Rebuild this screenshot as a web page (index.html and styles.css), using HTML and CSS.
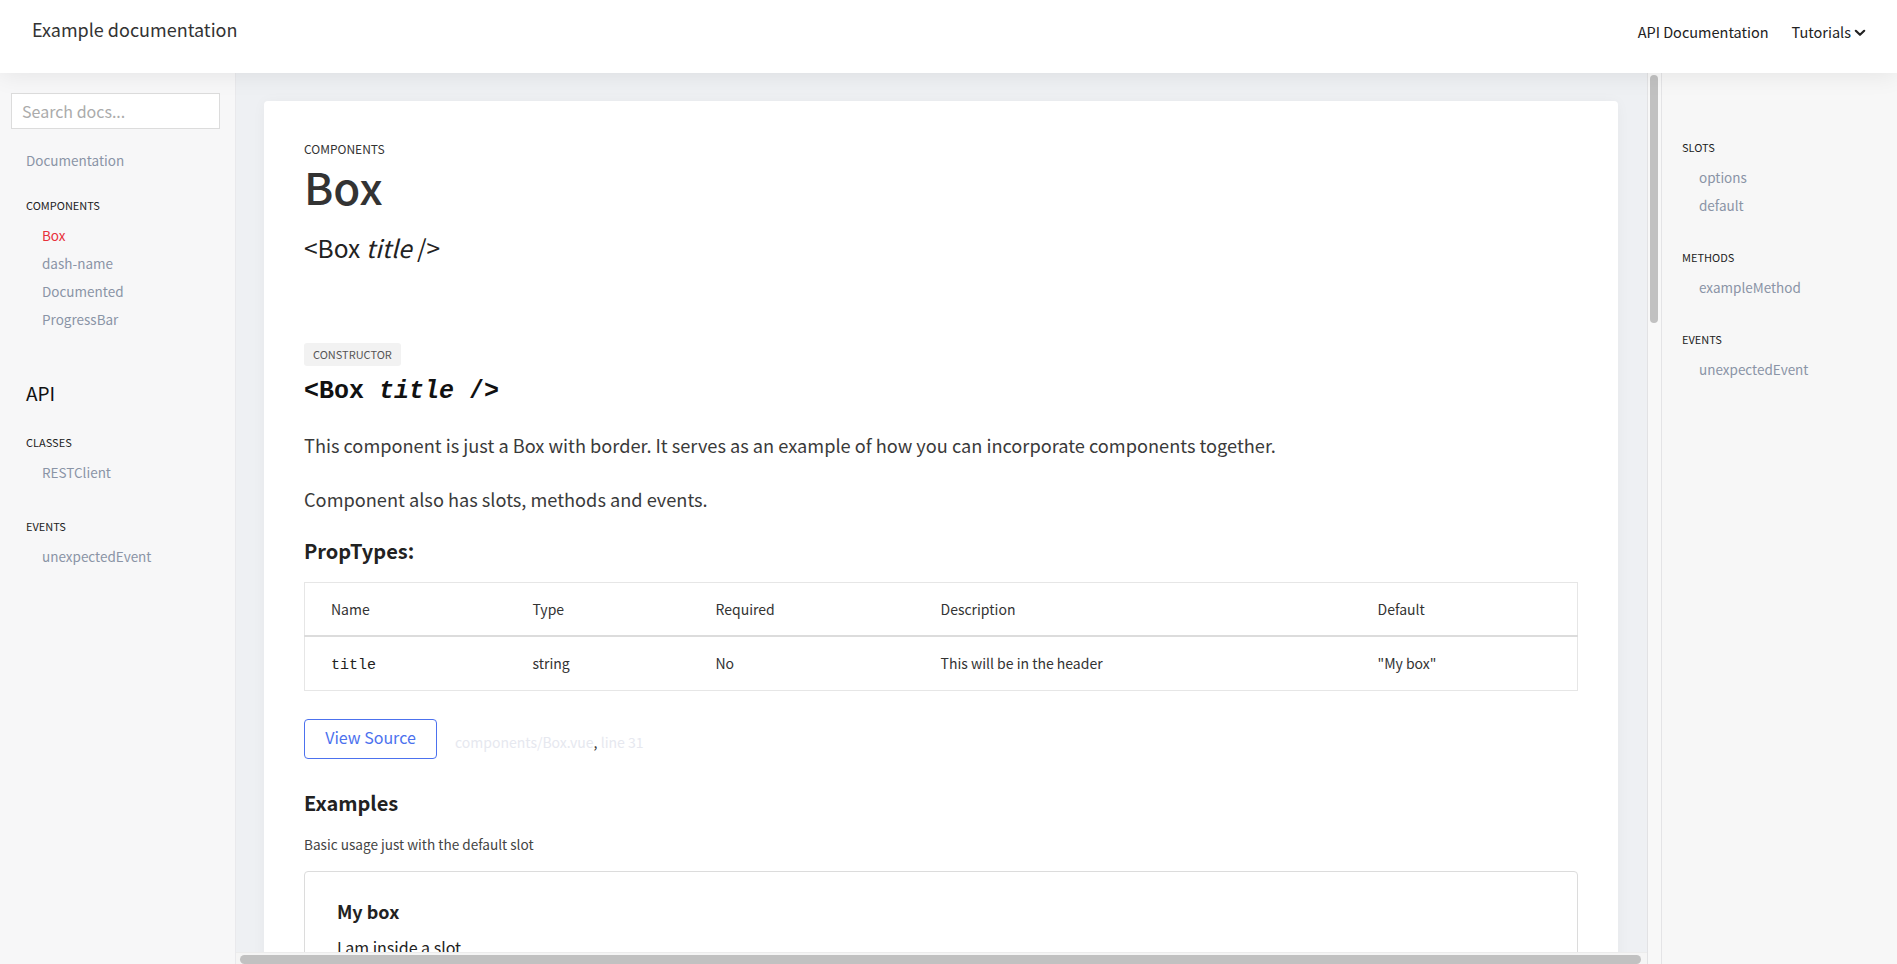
FILE: index.html
```html
<!DOCTYPE html>
<html lang="en">
<head>
<meta charset="utf-8">
<title>Box - Example documentation</title>
<link rel="stylesheet" href="styles.css">
</head>
<body>
<header class="topbar">
  <a class="brand" href="#">Example documentation</a>
  <nav class="topnav">
    <a href="#" class="topnav-link">API Documentation</a>
    <a href="#" class="topnav-link dropdown">Tutorials<svg class="chev" width="12" height="8" viewBox="0 0 12 8"><polyline points="1.8,1.8 6,5.8 10.2,1.8" fill="none" stroke="#222" stroke-width="2.2" stroke-linecap="round" stroke-linejoin="round"/></svg></a>
  </nav>
</header>
<div class="layout">
  <aside class="sidebar">
    <input class="search" type="text" placeholder="Search docs...">
    <a class="nav-link doc-link" href="#">Documentation</a>
    <div class="nav-heading after-doc">COMPONENTS</div>
    <ul class="nav-list">
      <li><a class="nav-link active" href="#">Box</a></li>
      <li><a class="nav-link" href="#">dash-name</a></li>
      <li><a class="nav-link" href="#">Documented</a></li>
      <li><a class="nav-link" href="#">ProgressBar</a></li>
    </ul>
    <h2 class="api-title">API</h2>
    <div class="nav-heading after-title">CLASSES</div>
    <ul class="nav-list">
      <li><a class="nav-link" href="#">RESTClient</a></li>
    </ul>
    <div class="nav-heading">EVENTS</div>
    <ul class="nav-list">
      <li><a class="nav-link" href="#">unexpectedEvent</a></li>
    </ul>
  </aside>

  <main class="main">
    <div class="main-col">
      <div class="viewport">
        <div class="content">
          <article class="card">
            <div class="kicker">COMPONENTS</div>
            <h1 class="page-title">Box</h1>
            <h2 class="signature">&lt;Box <em>title</em> /&gt;</h2>

            <span class="badge">CONSTRUCTOR</span>
            <h3 class="code-signature">&lt;Box <em>title</em> /&gt;</h3>

            <p class="para first">This component is just a Box with border. It serves as an example of how you can incorporate components together.</p>
            <p class="para">Component also has slots, methods and events.</p>

            <h4 class="section-title">PropTypes:</h4>
            <table class="props">
              <thead>
                <tr>
                  <th class="c-name">Name</th>
                  <th class="c-type">Type</th>
                  <th class="c-req">Required</th>
                  <th class="c-desc">Description</th>
                  <th class="c-def">Default</th>
                </tr>
              </thead>
              <tbody>
                <tr>
                  <td><code>title</code></td>
                  <td>string</td>
                  <td>No</td>
                  <td>This will be in the header</td>
                  <td>"My box"</td>
                </tr>
              </tbody>
            </table>

            <div class="source-row">
              <a class="btn-outline" href="#">View Source</a>
              <span class="source-meta"><a href="#">components/Box.vue</a><span class="comma">,</span> <a href="#">line 31</a></span>
            </div>

            <h4 class="section-title examples">Examples</h4>
            <p class="caption">Basic usage just with the default slot</p>
            <div class="example">
              <div class="example-title">My box</div>
              <p class="example-body">I am inside a slot</p>
            </div>
          </article>
        </div>
      </div>
      <div class="hscroll"><div class="hthumb"></div></div>
    </div>
    <div class="vscroll"><div class="vthumb"></div></div>
  </main>

  <aside class="toc">
    <div class="toc-heading first">SLOTS</div>
    <ul class="toc-list">
      <li><a class="toc-link" href="#">options</a></li>
      <li><a class="toc-link" href="#">default</a></li>
    </ul>
    <div class="toc-heading">METHODS</div>
    <ul class="toc-list">
      <li><a class="toc-link" href="#">exampleMethod</a></li>
    </ul>
    <div class="toc-heading">EVENTS</div>
    <ul class="toc-list">
      <li><a class="toc-link" href="#">unexpectedEvent</a></li>
    </ul>
  </aside>
</div>
</body>
</html>
```

FILE: styles.css
```css
* { box-sizing: border-box; }

html, body {
  margin: 0;
  padding: 0;
  height: 100%;
  overflow: hidden;
}

body {
  font-family: "Noto Sans CJK KR", "Noto Sans", sans-serif;
  color: #333;
  background: #eef0f3;
}

a { text-decoration: none; color: inherit; }
ul { list-style: none; margin: 0; padding: 0; }

/* ---------- top bar ---------- */
.topbar {
  position: relative;
  z-index: 2;
  height: 73px;
  background: #fff;
  display: flex;
  justify-content: space-between;
  align-items: flex-start;
  padding: 0 31px 0 32px;
  box-shadow: 0 2px 24px rgba(0, 0, 0, 0.08);
}

.brand {
  margin-top: 15px;
  font-size: 18px;
  line-height: 28px;
  color: #333;
}

.topnav {
  margin-top: 20px;
  display: flex;
  gap: 23px;
}

.topnav-link {
  font-size: 14.5px;
  line-height: 24px;
  color: #222;
  display: flex;
  align-items: center;
}

.chev { margin-left: 3px; margin-top: 2px; }

/* ---------- layout ---------- */
.layout {
  display: flex;
  height: calc(100% - 73px);
}

.sidebar {
  width: 236px;
  flex: none;
  background: #f7f7f8;
  border-right: 1px solid #e9e9ec;
  padding: 20px 16px 0 11px;
}

.search {
  display: block;
  width: 209px;
  height: 36px;
  border: 1px solid #dcdcdc;
  background: #fff;
  font-family: inherit;
  font-size: 16px;
  padding: 0 10px;
  color: #333;
  outline: none;
}
.search::placeholder { color: #ababab; }

.nav-link {
  display: block;
  font-size: 13.5px;
  line-height: 28px;
  color: #8a94a6;
}

.doc-link { margin-top: 17px; padding-left: 15px; }

.nav-heading {
  margin-top: 32px;
  padding-left: 15px;
  font-size: 11px;
  line-height: 16px;
  color: #222;
}
.nav-heading.after-doc { margin-top: 23px; }
.nav-heading.after-title { margin-top: 27px; }

.nav-list { margin-top: 8px; padding-left: 31px; }

.nav-link.active { color: #e8313a; }

.api-title {
  margin: 46px 0 0;
  padding-left: 15px;
  font-size: 19px;
  line-height: 28px;
  font-weight: 400;
  color: #111;
}

/* ---------- main area with its scrollbars ---------- */
.main {
  flex: 1;
  min-width: 0;
  display: flex;
  background: #eef0f3;
}

.main-col {
  flex: 1;
  min-width: 0;
  display: flex;
  flex-direction: column;
}

.viewport {
  flex: 1;
  min-height: 0;
  overflow: hidden;
}

.hscroll {
  flex: none;
  height: 12px;
  background: #f5f5f5;
  border-top: 1px solid #ececec;
  padding: 2px 6px 0 4px;
}

.hthumb {
  height: 9px;
  background: #c1c1c1;
  border-radius: 5px;
}

.vscroll {
  flex: none;
  width: 14px;
  background: #f8f8f8;
  border-left: 1px solid #e2e2e4;
  padding: 2px 3px 0 2px;
}

.vthumb {
  height: 248px;
  background: #c1c1c1;
  border-radius: 4px;
}

.content {
  padding: 28px 29px 28px 28px;
}

.card {
  background: #fff;
  border-radius: 4px;
  box-shadow: 0 1px 14px rgba(0, 0, 0, 0.04);
  padding: 40px 40px 60px;
  min-height: 3010px;
}

.kicker {
  font-size: 12px;
  line-height: 16px;
  color: #333;
}

.page-title {
  margin: 1px 0 0;
  font-size: 44px;
  line-height: 56px;
  font-weight: 500;
  color: #333;
}

.signature {
  margin: 18px 0 0;
  font-size: 24.5px;
  line-height: 32px;
  font-weight: 400;
  color: #222;
}
.signature em { font-style: italic; }

.badge {
  display: inline-block;
  margin-top: 79px;
  height: 23px;
  line-height: 23px;
  padding: 0 9px;
  background: #f2f2f2;
  border-radius: 3px;
  font-size: 11px;
  color: #555;
}

.code-signature {
  margin: 10px 0 0;
  font-family: "Liberation Mono", "DejaVu Sans Mono", monospace;
  font-size: 25px;
  line-height: 32px;
  font-weight: 700;
  color: #111;
}

.para {
  margin: 26px 0 0;
  font-size: 18.2px;
  line-height: 28px;
  color: #3a3a3a;
}
.para.first { margin-top: 23px; }

.section-title {
  margin: 24px 0 0;
  font-size: 20px;
  line-height: 28px;
  font-weight: 700;
  color: #222;
}
.section-title.examples { margin-top: 30px; }

.props {
  margin-top: 17px;
  width: 100%;
  border-collapse: collapse;
  border: 1px solid #e6e6e6;
  font-size: 14px;
  color: #333;
  table-layout: fixed;
}
.props th, .props td {
  text-align: left;
  font-weight: 400;
  padding: 0 0 0 26px;
}
.props th { height: 53px; }
.props td { height: 55px; }
.props thead th { border-bottom: 2px solid #dcdcdc; }
.props td code {
  font-family: "Liberation Mono", "DejaVu Sans Mono", monospace;
  font-size: 15px;
  color: #222;
}
.c-name { width: 202px; }
.c-type { width: 183px; }
.c-req { width: 225px; }
.c-desc { width: 437px; }

.source-row {
  margin-top: 28px;
  display: flex;
  align-items: center;
  gap: 18px;
}

.btn-outline {
  display: inline-flex;
  align-items: center;
  justify-content: center;
  width: 133px;
  height: 40px;
  border: 1px solid #4c71ee;
  border-radius: 4px;
  color: #4c71ee;
  font-size: 16px;
  padding-bottom: 5px;
}

.source-meta {
  font-size: 14px;
  color: #e6e8ef;
  margin-top: 6px;
}
.source-meta .comma { color: #333; }

.caption {
  margin: 16px 0 0;
  font-size: 13.6px;
  line-height: 22px;
  color: #444;
}

.example {
  margin: 16px 0 40px;
  border: 1px solid #dcdcdc;
  border-radius: 4px;
  padding: 26px 32px 30px;
}

.example-title {
  font-size: 18px;
  line-height: 26px;
  font-weight: 700;
  color: #222;
}

.example-body {
  margin: 11px 0 0;
  font-size: 16px;
  line-height: 24px;
  color: #222;
}

/* ---------- right toc ---------- */
.toc {
  width: 236px;
  flex: none;
  background: #f7f7f7;
  border-left: 1px solid #e4e4e6;
  padding: 66px 16px 0 20px;
}

.toc-heading {
  margin-top: 30px;
  font-size: 11px;
  line-height: 16px;
  color: #222;
}
.toc-heading.first { margin-top: 0; }

.toc-list { margin-top: 8px; padding-left: 17px; }

.toc-link {
  display: block;
  font-size: 13.5px;
  line-height: 28px;
  color: #8a94a6;
}
```
